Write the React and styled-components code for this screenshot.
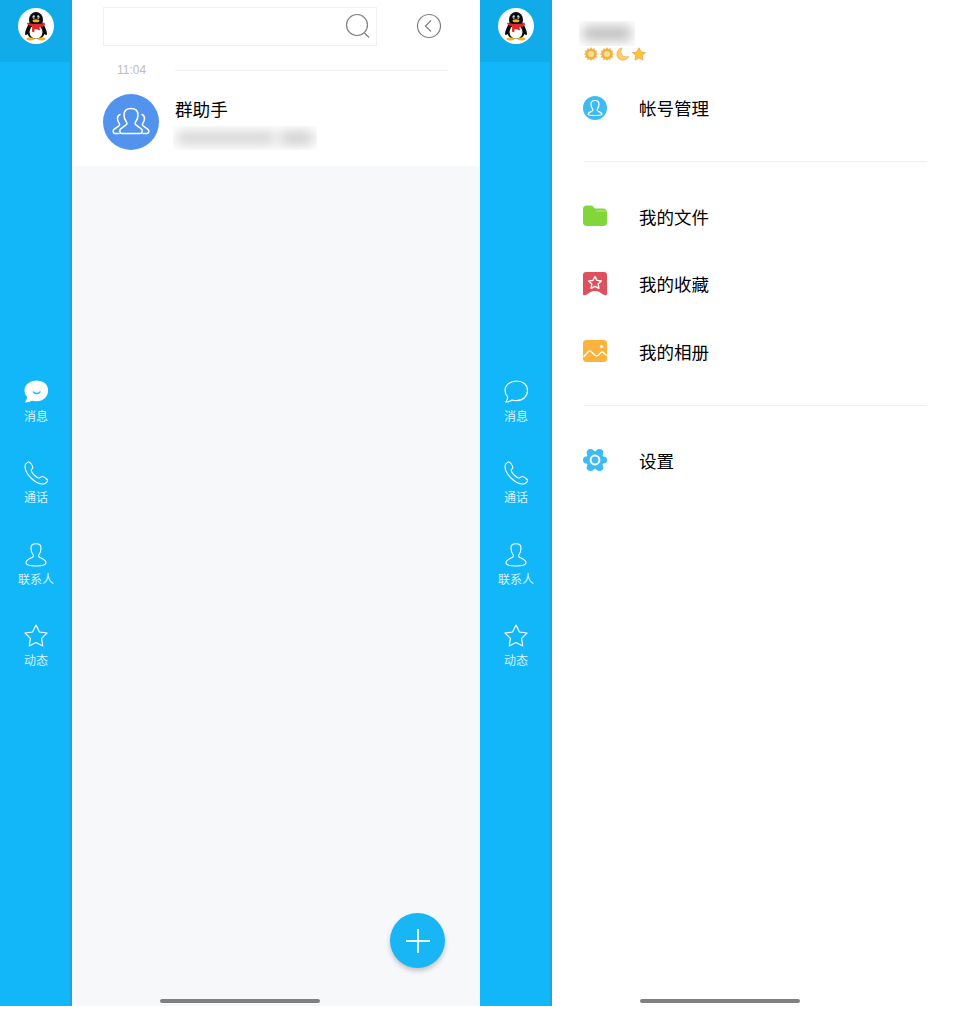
import React from 'react'
import styled, { createGlobalStyle } from 'styled-components'

const GlobalStyle = createGlobalStyle`
  html, body { margin: 0; padding: 0; background: #fff; }
  body { font-family: "Noto Sans CJK SC", "Liberation Sans", sans-serif; }
`

const Page = styled.div`
  display: flex;
  width: 961px;
  height: 1022px;
  overflow: hidden;
  background: #fff;
`
const Phone = styled.section`
  position: relative;
  display: flex;
  width: 480px;
  height: 1006px;
`
const HomeBar = styled.div`
  position: absolute;
  left: 160px;
  bottom: 3px;
  width: 160px;
  height: 4px;
  border-radius: 2px;
  background: #808080;
`
const Rail = styled.aside`
  flex: 0 0 72px;
  display: flex;
  flex-direction: column;
  background: #11b7f8;
  box-shadow: inset -2px 0 0 #1ea3db;
`
const RailTop = styled.div`
  height: 62px;
  display: flex;
  justify-content: center;
  padding-top: 8px;
  box-sizing: border-box;
  background: #10abe8;
  box-shadow: inset -1px 0 0 #1ea3db;
`
const Nav = styled.nav`
  display: flex;
  flex-direction: column;
  margin-top: 318px;
`
const NavItem = styled.div`
  height: 81.3px;
  display: flex;
  flex-direction: column;
  align-items: center;
  color: #d8f3ff;
  font-size: 12px;
  line-height: 14px;
  svg { display: block; margin-bottom: 5px; }
`
const Main = styled.main`
  flex: 1;
  display: flex;
  flex-direction: column;
  background: #f7f8fa;
`
const ListHead = styled.div`
  height: 166px;
  background: #fff;
  box-sizing: border-box;
  padding: 7px 32px 0 31px;
`
const SearchRow = styled.div`
  display: flex;
  align-items: center;
`
const SearchBox = styled.div`
  width: 274px;
  height: 39px;
  box-sizing: border-box;
  border: 1px solid #f1f1f3;
  display: flex;
  align-items: center;
  justify-content: flex-end;
  padding: 1px 5px 0 0;
`
const BackIcon = styled.svg`
  margin-left: 38.5px;
  margin-top: -1px;
`
const TimeRow = styled.div`
  display: flex;
  align-items: center;
  margin-top: 15px;
  padding-left: 14px;
  height: 18px;
`
const Time = styled.span`
  width: 58px;
  color: #bdbdbd;
  font-family: "Liberation Sans", sans-serif;
  font-size: 12px;
`
const TimeLine = styled.div`
  width: 273px;
  height: 1px;
  background: #f0f0f2;
`
const Chat = styled.div`
  display: flex;
  gap: 16px;
  margin-top: 15px;
`
const Avatar = styled.div`
  width: 56px;
  height: 56px;
  border-radius: 50%;
  background: #5294ed;
  display: flex;
  align-items: center;
  justify-content: center;
`
const ChatBody = styled.div`
  display: flex;
  flex-direction: column;
`
const ChatTitle = styled.div`
  font-size: 17.6px;
  line-height: 24px;
  color: #000;
  margin-top: 3px;
`
const Redact = styled.div`
  width: ${p => p.$w}px;
  height: ${p => p.$h}px;
  overflow: hidden;
  margin-left: ${p => p.$ml || 0}px;
  margin-top: ${p => p.$mt || 0}px;
  display: flex;
  align-items: center;
  gap: 5px;
  padding: 0 4px;
  box-sizing: border-box;
`
const Smudge = styled.span`
  flex: ${p => p.$grow || 1};
  height: ${p => p.$h || 12}px;
  background: ${p => p.$c || '#d6d6d6'};
  filter: blur(${p => p.$blur || 6}px);
`
const Fab = styled.div`
  position: absolute;
  left: 390px;
  top: 913px;
  width: 55px;
  height: 55px;
  border-radius: 50%;
  background: #19b6f6;
  box-shadow: 0 3px 5px rgba(0, 0, 0, 0.22);
  display: flex;
  align-items: center;
  justify-content: center;
`
const Drawer = styled.main`
  flex: 1;
  background: #fff;
  padding: 21px 33px 0 27px;
  box-sizing: border-box;
`
const Levels = styled.div`
  display: flex;
  gap: 2px;
  margin: 0 0 0 5px;
  height: 16px;
  align-items: center;
`
const Group = styled.div`
  padding: ${p => p.$first ? '12px 0 19px' : '21px 0 19.500px'};
  border-bottom: ${p => p.$last ? 'none' : '1px solid #f0f0f2'};
  margin-left: 5px;
`
const Row = styled.div`
  height: 67.5px;
  display: flex;
  align-items: center;
  color: #000;
  font-size: 17.5px;
  svg { flex: 0 0 24px; margin-right: 32px; margin-left: -1px; }
`

const Penguin = () => (
  <svg width="36" height="36" viewBox="0 0 36 36">
    <circle cx="18" cy="18" r="18" fill="#fff" />
    <ellipse cx="18" cy="12" rx="7" ry="8" fill="#0a0a0a" />
    <path d="M11 15c-2 4-4 8-4 11 0 1.500 1.500 1 2.500 0 1 3 4 5 8.500 5s7.500-2 8.500-5c1 1 2.500 1.500 2.500 0 0-3-2-7-4-11z" fill="#0a0a0a" />
    <ellipse cx="18" cy="24" rx="6.500" ry="6.800" fill="#fff" />
    <path d="M9.500 14.500c5 2 12 2 17 0l.5 2.500c-1 1.200-3.500 1.800-5.500 2.200l.5 3.300-3.500-1.200-2-.1-.3 3.300-2.200-1 .2-5.500c-2-.4-4.200-1-5.200-2z" fill="#e4262b" />
    <ellipse cx="18" cy="12.800" rx="3.400" ry="1.500" fill="#f5b21a" />
    <ellipse cx="15.800" cy="9" rx="1.300" ry="1.800" fill="#fff" />
    <ellipse cx="20.200" cy="9" rx="1.300" ry="1.800" fill="#fff" />
    <circle cx="16.100" cy="9.200" r=".7" fill="#000" />
    <circle cx="19.900" cy="9.200" r=".7" fill="#000" />
    <ellipse cx="12.500" cy="31" rx="4" ry="1.400" fill="#f5b21a" />
    <ellipse cx="23.500" cy="31" rx="4" ry="1.400" fill="#f5b21a" />
  </svg>
)

const stroke = { fill: 'none', stroke: '#fff', strokeWidth: 1.1, strokeLinejoin: 'round', strokeLinecap: 'round' }
const thick = { ...stroke, strokeWidth: 1.5 }

const MessageIcon = ({ filled }) => (
  <svg width="26" height="24" viewBox="0 0 26 24">
    <path
      d="M13.500 1C7.500 1 2 5 2 10.500c0 2.500 1 4.500 2.500 6 .3 2-.5 4-1.800 5.500 2.500 0 4.800-1 6.300-2 1.300.4 2.800.6 4.500.6 6.500 0 11-4.200 11-10.100S20 1 13.500 1z"
      {...stroke}
      fill={filled ? '#fff' : 'none'}
    />
    {filled && <path d="M10.500 12c1 2 5.400 2 6.400 0" fill="none" stroke="#11b7f8" strokeWidth="1.400" strokeLinecap="round" />}
  </svg>
)
const PhoneIcon = () => (
  <svg width="26" height="24" viewBox="0 0 26 24">
    <path d="M5.500 1C3.500 1.800 2 3.500 2 5.500 2 9 4.500 13.500 8 17c3.500 3.500 8 6 11.500 6 2.500 0 5-1.500 5-3.500 0-1.500-3.700-4-5.200-4-1.300 0-2 1.700-3.300 1.500C13 16.500 8.500 12 8.300 9.500 8.200 8.200 9.800 7.800 9.800 6.500 9.800 5 7 .5 5.500 1z" {...stroke} />
  </svg>
)
const PersonIcon = () => (
  <svg width="26" height="24" viewBox="0 0 26 24">
    <path d="M13 .8c-3.500 0-5 1-5 4.400 0 2.600.8 4.800 2 6.300.7.900.6 2.200-.5 2.800C6.800 15.700 3 16.800 3 19.800 3 22 7.500 23 13 23s10-1 10-3.200c0-3-3.800-4.100-6.500-5.500-1.100-.6-1.200-1.900-.5-2.800 1.200-1.500 2-3.700 2-6.300 0-3.400-1.500-4.400-5-4.400z" {...stroke} />
  </svg>
)
const StarIcon = () => (
  <svg width="26" height="24" viewBox="0 0 26 24">
    <path d="M13 1l3.500 7 7.500 1-5.400 5.300 1.200 7.700-6.800-3.500L6.200 22l1.200-7.700L2 9l7.500-1z" {...stroke} />
  </svg>
)
const SearchIcon = () => (
  <svg width="26" height="28" viewBox="0 0 26 28">
    <circle cx="12" cy="12" r="10.500" fill="none" stroke="#808080" strokeWidth="1.200" />
    <path d="M19.500 20l4.500 4.500" stroke="#808080" strokeWidth="1.200" fill="none" />
  </svg>
)
const GroupIcon = () => (
  <svg width="38" height="30" viewBox="0 0 38 30">
    <path d="M8 7.500C6.500 8 5.500 9.300 5.500 11.500c0 2 .8 3.800 1.800 5 .5.800.5 1.700-.4 2.400L2 22.300C.5 23.500 1 26.500 3 26.500h4" {...thick} />
    <path d="M30 7.500c1.500.5 2.500 1.800 2.500 4 0 2-.8 3.800-1.800 5-.5.800-.5 1.700.4 2.400l4.900 3.400c1.500 1.200 1 4.200-1 4.200h-4" {...thick} />
    <path d="M19 1.500c-4.500 0-7 2.500-7 6.500 0 2.800 1 5.200 2.300 6.800.9 1.100.8 2.600-.5 3.400l-4.800 3.400c-2 1.400-1.500 4.900 1 4.900h18c2.500 0 3-3.500 1-4.900l-4.800-3.400c-1.300-.8-1.400-2.300-.5-3.400C25 13.200 26 10.800 26 8c0-4-2.500-6.500-7-6.500z" {...thick} />
  </svg>
)

const Sun = () => (
  <svg width="14" height="14" viewBox="0 0 14 14">
    <path d="M7 0l1.300 2.200L10.500 1l.3 2.600 2.500.1-1.100 2.300L14 7l-1.800 1.300 1 2.300-2.500.2-.3 2.500-2.200-1.200L7 14l-1.300-1.900-2.200 1.200-.4-2.500-2.400-.2 1-2.300L0 7l1.800-1 -1.100-2.300 2.500-.1.300-2.600 2.200 1.200z" fill="#f4b040" />
    <circle cx="7" cy="7" r="3.600" fill="#fbe08a" stroke="#e99a2a" strokeWidth=".6" />
  </svg>
)
const Moon = () => (
  <svg width="14" height="14" viewBox="0 0 14 14">
    <path d="M6 .8C2.800 1.500.8 4 .8 7.200c0 3.500 2.800 6 6 6 2.800 0 5-1.500 6.200-4-3 1.300-6 .6-7.200-1.600C4.600 5.400 4.800 3 6 .8z" fill="#f8cf6a" stroke="#e9a02c" strokeWidth=".5" />
  </svg>
)
const LevelStar = () => (
  <svg width="14" height="14" viewBox="0 0 14 14">
    <path d="M7 .8l2 4.100 4.500.6-3.300 3.100.9 4.500L7 11l-4.100 2.100.9-4.500L.5 5.500 5 4.900z" fill="#f9c53e" stroke="#ea9c2b" strokeWidth=".7" strokeLinejoin="round" />
  </svg>
)

const AccountGlyph = () => (
  <svg width="24" height="24" viewBox="0 0 24 24">
    <circle cx="12" cy="12" r="12" fill="#3dbbf2" />
    <path d="M12 4.500c-2.800 0-4 1.300-4 3.600 0 2 .6 3.700 1.500 4.800.6.700.5 1.600-.3 2.100-1.800 1-4.200 1.700-4.200 3.300 0 .8 3 1.200 7 1.200s7-.4 7-1.200c0-1.600-2.400-2.300-4.200-3.300-.8-.5-.9-1.400-.3-2.100.9-1.100 1.500-2.800 1.500-4.800 0-2.300-1.200-3.600-4-3.600z" fill="none" stroke="#fff" strokeWidth="1.200" strokeLinejoin="round" />
  </svg>
)
const FolderGlyph = () => (
  <svg width="24" height="24" viewBox="0 0 24 24">
    <path d="M3.500 1.500h4.500c1 0 1.500.5 2.200 1.300L12 4.500h8.500c2 0 3.500 1.500 3.500 3.500v10.500c0 2-1.500 3.500-3.500 3.500h-17c-2 0-3.500-1.500-3.500-3.500v-13.500c0-2 1.500-3.500 3.500-3.500z" fill="#83d63a" />
    <path d="M13 7h11" stroke="#b4e884" strokeWidth="1" />
  </svg>
)
const BookmarkGlyph = () => (
  <svg width="24" height="24" viewBox="0 0 24 24">
    <path d="M3 0h18c2 0 3 1 3 3v19c0 1-.8 1.500-1.800 1.200-2-.6-4-1.700-5.700-3.200-2.500-1.300-6.500-1.300-9 0-1.700 1.500-3.700 2.600-5.700 3.200C.8 23.500 0 23 0 22V3C0 1 1 0 3 0z" fill="#df505f" />
    <path d="M12 4.500l2 3.900 4.300.6-3.100 3 .7 4.300-3.900-2-3.900 2 .7-4.300-3.100-3 4.300-.6z" fill="none" stroke="#fff" strokeWidth="1.400" strokeLinejoin="round" />
  </svg>
)
const ImageGlyph = () => (
  <svg width="24" height="24" viewBox="0 0 24 24">
    <rect y="1" width="24" height="22" rx="3.500" fill="#fbb33e" />
    <path d="M.5 18l5-5.500c.8-.8 1.700-.8 2.500 0l3.500 3.500c1.500 1.300 2.500 1.300 4 0l2.500-2.500c.8-.7 1.500-.7 2.300 0l3.200 3" fill="none" stroke="#fff" strokeWidth="1.300" />
    <circle cx="18.500" cy="7.500" r="1.500" fill="#fff" />
  </svg>
)
const GearGlyph = () => (
  <svg width="24" height="24" viewBox="0 0 24 24">
    <g fill="#3dbbf2">
      <circle cx="20.500" cy="12" r="3.500" />
      <circle cx="3.500" cy="12" r="3.500" />
      <circle cx="16.500" cy="4.800" r="3.800" />
      <circle cx="7.500" cy="4.800" r="3.800" />
      <circle cx="16.500" cy="19.200" r="3.800" />
      <circle cx="7.500" cy="19.200" r="3.800" />
      <circle cx="12" cy="12" r="9" />
    </g>
    <circle cx="12" cy="12" r="4.400" fill="none" stroke="#fff" strokeWidth="2" />
  </svg>
)

const navItems = [
  { label: '消息', icon: MessageIcon },
  { label: '通话', icon: PhoneIcon },
  { label: '联系人', icon: PersonIcon },
  { label: '动态', icon: StarIcon },
]

const SideRail = ({ activeMessage }) => (
  <Rail>
    <RailTop><Penguin /></RailTop>
    <Nav>
      {navItems.map(({ label, icon: Icon }, i) => (
        <NavItem key={label}>
          <Icon filled={activeMessage && i === 0} />
          {label}
        </NavItem>
      ))}
    </Nav>
  </Rail>
)

export default function App() {
  return (
    <Page>
      <GlobalStyle />
      <Phone>
        <SideRail activeMessage />
        <Main>
          <ListHead>
            <SearchRow>
              <SearchBox><SearchIcon /></SearchBox>
              <BackIcon width="26" height="26" viewBox="0 0 26 26">
                <circle cx="13" cy="13" r="11.500" fill="none" stroke="#808080" strokeWidth="1.200" />
                <path d="M15 7.500L9.500 13l5.500 5.500" fill="none" stroke="#808080" strokeWidth="1.200" />
              </BackIcon>
            </SearchRow>
            <TimeRow>
              <Time>11:04</Time>
              <TimeLine />
            </TimeRow>
            <Chat>
              <Avatar><GroupIcon /></Avatar>
              <ChatBody>
                <ChatTitle>群助手</ChatTitle>
                <Redact $w={144} $h={24} $ml={-2} $mt={5}>
                  <Smudge $grow={3} $h={14} />
                  <Smudge $grow={1} $h={14} $c="#cfcfcf" />
                </Redact>
              </ChatBody>
            </Chat>
          </ListHead>
        </Main>
        <Fab>
          <svg width="26" height="26" viewBox="0 0 26 26">
            <path d="M13 1v24M1 13h24" stroke="#e6f8ff" strokeWidth="2" />
          </svg>
        </Fab>
        <HomeBar />
      </Phone>
      <Phone>
        <SideRail />
        <Drawer>
          <Redact $w={56} $h={25}>
            <Smudge $c="#bfbfbf" $h={15} />
          </Redact>
          <Levels>
            <Sun />
            <Sun />
            <Moon />
            <LevelStar />
          </Levels>
          <Group $first>
            <Row><AccountGlyph />帐号管理</Row>
          </Group>
          <Group>
            <Row><FolderGlyph />我的文件</Row>
            <Row><BookmarkGlyph />我的收藏</Row>
            <Row><ImageGlyph />我的相册</Row>
          </Group>
          <Group $last>
            <Row><GearGlyph />设置</Row>
          </Group>
        </Drawer>
        <HomeBar />
      </Phone>
    </Page>
  )
}
